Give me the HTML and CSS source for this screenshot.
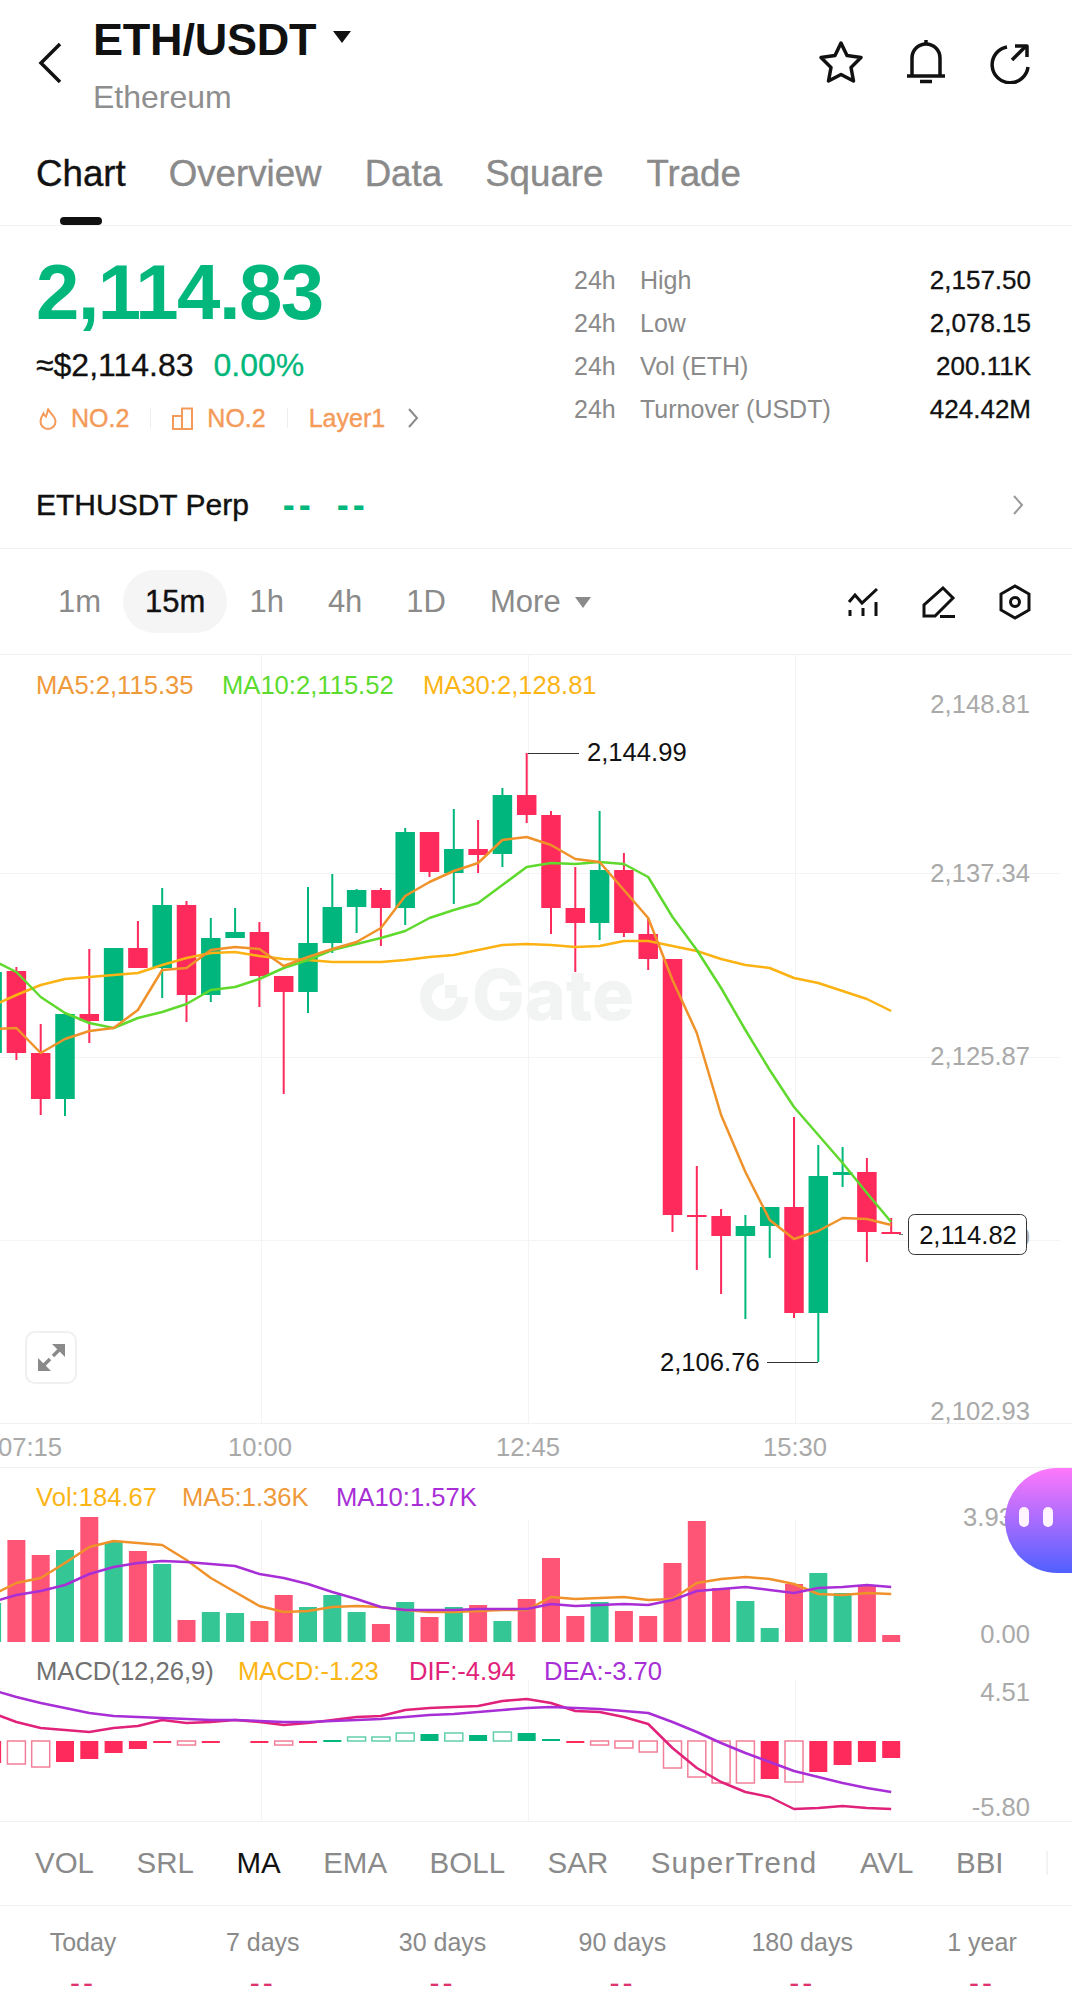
FILE: index.html
```html
<!DOCTYPE html>
<html lang="en">
<head>
    <meta charset="UTF-8">
    <meta name="viewport" content="width=device-width, initial-scale=1.0">
    <title>ETH/USDT</title>
    <link rel="stylesheet" href="styles.css">
</head>
<body>
    <div class="app">
        <header class="topbar">
            <svg class="back-icon" width="24" height="42" viewBox="0 0 24 42"><polyline points="22,2 3,21 22,40"/></svg>
            <div class="pair">
                <div class="pair-name">ETH/USDT <span class="caret-big"></span></div>
                <div class="pair-sub">Ethereum</div>
            </div>
            <div class="actions">
                <svg class="icon star" width="46" height="44" viewBox="0 0 46 44"><polygon points="23,3 29,15.500 43,17.500 33,27.500 35.500,41 23,34.500 10.500,41 13,27.500 3,17.500 17,15.500"/></svg>
                <svg class="icon bell" width="40" height="44" viewBox="0 0 40 44"><path d="M6 36V18a14 14 0 0 1 28 0V36"/><path d="M1 36H39"/><path d="M20 0V4"/><path d="M14 41.500H26"/></svg>
                <svg class="icon share" width="42" height="44" viewBox="0 0 42 44"><path d="M19 7A18 18 0 1 0 40 27"/><path d="M24 20L38 6"/><path d="M27 6H39V17"/></svg>
            </div>
        </header>

        <nav class="tabs">
            <a class="tab active">Chart</a>
            <a class="tab">Overview</a>
            <a class="tab">Data</a>
            <a class="tab">Square</a>
            <a class="tab">Trade</a>
        </nav>

        <section class="summary">
            <div class="summary-left">
                <div class="price">2,114.83</div>
                <div class="fiat-row">
                    <span class="fiat">≈$2,114.83</span>
                    <span class="change">0.00%</span>
                </div>
                <div class="tags">
                    <svg class="tag-icon" width="18" height="23" viewBox="0 0 18 23"><path d="M9 1.500C10 6 16.500 9 16.500 14.500a7.500 7.500 0 0 1-15 0C1.500 11 3 9 4.500 6.500C5 8 6 9 7 9.500C8 7 9 4.500 9 1.500Z"/></svg>
                    <span class="tag-text">NO.2</span>
                    <i class="tag-sep"></i>
                    <svg class="tag-icon" width="21" height="23" viewBox="0 0 21 23"><path d="M1 9H10V22H1Z"/><path d="M10 9V1.500H20V22H10"/></svg>
                    <span class="tag-text">NO.2</span>
                    <i class="tag-sep"></i>
                    <span class="tag-text">Layer1</span>
                    <svg class="tag-more" width="12" height="20" viewBox="0 0 12 20"><polyline points="2,1 10,10 2,19"/></svg>
                </div>
            </div>
            <div class="stats">
                <div class="stat-row"><span class="stat-h">24h</span><span class="stat-label">High</span><span class="stat-value">2,157.50</span></div>
                <div class="stat-row"><span class="stat-h">24h</span><span class="stat-label">Low</span><span class="stat-value">2,078.15</span></div>
                <div class="stat-row"><span class="stat-h">24h</span><span class="stat-label">Vol (ETH)</span><span class="stat-value">200.11K</span></div>
                <div class="stat-row"><span class="stat-h">24h</span><span class="stat-label">Turnover (USDT)</span><span class="stat-value">424.42M</span></div>
            </div>
        </section>

        <section class="perp">
            <span class="perp-name">ETHUSDT Perp</span>
            <span class="perp-dash">--</span>
            <span class="perp-dash">--</span>
            <svg class="perp-more" width="12" height="20" viewBox="0 0 12 20"><polyline points="2,1 10,10 2,19"/></svg>
        </section>

        <section class="intervals">
            <span class="interval">1m</span>
            <span class="interval active">15m</span>
            <span class="interval">1h</span>
            <span class="interval">4h</span>
            <span class="interval">1D</span>
            <span class="interval">More <span class="caret-small"></span></span>
            <div class="tools">
                <svg class="icon" width="32" height="30" viewBox="0 0 32 30"><polyline points="2,15 8,8 15,16 30,2"/><path d="M3 23V29M16 21V29M29 15V29"/></svg>
                <svg class="icon" width="34" height="32" viewBox="0 0 34 32"><path d="M21 2L31 12L13 30H2V19Z"/><path d="M18 30.500H33"/></svg>
                <svg class="icon" width="32" height="36" viewBox="0 0 32 36"><polygon points="16,2 30,10 30,26 16,34 2,26 2,10"/><circle cx="16" cy="18" r="4.500"/></svg>
            </div>
        </section>

        <section class="chart">
            <svg id="chart" width="1072" height="1166" viewBox="0 655 1072 1166"></svg>
            <button class="expand">
                <svg class="expand-icon" width="27" height="27" viewBox="0 0 27 27"><polygon points="27,0 27,13 14,0"/><polygon points="0,27 0,14 13,27"/><path d="M21 6L15 12M6 21L12 15"/></svg>
            </button>
            <div class="bubble"><i></i><i></i></div>
        </section>

        <nav class="indicators">
            <span>VOL</span>
            <span>SRL</span>
            <span class="active">MA</span>
            <span>EMA</span>
            <span>BOLL</span>
            <span>SAR</span>
            <span class="wide">SuperTrend</span>
            <span>AVL</span>
            <span>BBI</span>
            <i class="fade"></i>
        </nav>

        <section class="periods">
            <div class="period"><span>Today</span><b>--</b></div>
            <div class="period"><span>7 days</span><b>--</b></div>
            <div class="period"><span>30 days</span><b>--</b></div>
            <div class="period"><span>90 days</span><b>--</b></div>
            <div class="period"><span>180 days</span><b>--</b></div>
            <div class="period"><span>1 year</span><b>--</b></div>
        </section>
    </div>
    <script src="chart.js"></script>
</body>
</html>
```

FILE: styles.css
```css
body {
    margin: 0;
    background: #fff;
    color: #111;
    font-family: "Liberation Sans", Arial, sans-serif;
}
.app {
    width: 1072px;
    height: 2012px;
    overflow: hidden;
}
.icon {
    fill: none;
    stroke: #111;
    stroke-width: 3;
}

/* top bar */
.topbar {
    display: flex;
    height: 125px;
    box-sizing: border-box;
    padding: 15px 42px 0 38px;
}
.back-icon {
    margin-top: 27px;
    fill: none;
    stroke: #111;
    stroke-width: 3.5;
}
.pair {
    margin: 2px 0 0 31px;
}
.pair-name {
    font-size: 45px;
    line-height: 46px;
    font-weight: bold;
    letter-spacing: -0.2px;
}
.caret-big {
    display: inline-block;
    margin-left: 4px;
    vertical-align: 12px;
    border-left: 9px solid transparent;
    border-right: 9px solid transparent;
    border-top: 12px solid #111;
}
.pair-sub {
    margin-top: 14px;
    font-size: 32px;
    line-height: 40px;
    color: #8e8e8e;
}
.actions {
    display: flex;
    gap: 42px;
    height: 44px;
    margin: 25px 0 0 auto;
}
.actions .icon {
    stroke-width: 3.5;
    stroke-linejoin: round;
}

/* tabs */
.tabs {
    display: flex;
    gap: 43px;
    height: 101px;
    padding: 25px 36px 0;
    box-sizing: border-box;
    border-bottom: 1px solid #f1f1f1;
}
.tab {
    position: relative;
    font-size: 36.700px;
    line-height: 48px;
    color: #8a8a8a;
    -webkit-text-stroke: 0.4px #8a8a8a;
}
.tab.active {
    color: #111;
    -webkit-text-stroke: 0.4px #111;
}
.tab.active::after {
    content: "";
    position: absolute;
    left: 24px;
    top: 67px;
    width: 42px;
    height: 8px;
    border-radius: 4px;
    background: #111;
}

/* price summary */
.summary {
    display: flex;
    justify-content: space-between;
    height: 236px;
    box-sizing: border-box;
    padding: 28px 41px 0 36px;
}
.price {
    font-size: 78px;
    line-height: 76px;
    font-weight: bold;
    letter-spacing: -1.600px;
    color: #02b77b;
}
.fiat-row {
    display: flex;
    gap: 20px;
    margin-top: 15px;
    line-height: 40px;
    font-size: 32px;
    -webkit-text-stroke: 0.3px;
}
.change {
    color: #02b77b;
}
.tags {
    display: flex;
    align-items: center;
    margin-top: 18px;
    padding-left: 3px;
    height: 30px;
    color: #f49b5a;
}
.tag-icon {
    fill: none;
    stroke: #f49b5a;
    stroke-width: 2;
    margin-right: 14px;
}
.tag-text {
    font-size: 25px;
    -webkit-text-stroke: 0.4px #f49b5a;
}
.tag-sep {
    width: 1px;
    height: 20px;
    margin: 0 21px;
    background: #eee;
}
.tag-more {
    margin-left: 22px;
    fill: none;
    stroke: #8a8a8a;
    stroke-width: 2;
}
.stats {
    width: 457px;
    padding-top: 5px;
    font-size: 25px;
    color: #8a8a8a;
}
.stat-row {
    display: flex;
    line-height: 43px;
}
.stat-h {
    width: 66px;
}
.stat-value {
    margin-left: auto;
    font-size: 26px;
    color: #111;
    -webkit-text-stroke: 0.3px #111;
}

/* perpetual row */
.perp {
    display: flex;
    align-items: center;
    height: 87px;
    box-sizing: border-box;
    padding: 0 48px 0 36px;
    border-bottom: 1px solid #f1f1f1;
}
.perp-name {
    font-size: 30px;
    -webkit-text-stroke: 0.4px #111;
}
.perp-dash {
    margin-left: 22px;
    font-size: 36px;
    font-weight: bold;
    letter-spacing: 4px;
    color: #02b77b;
}
.perp-name + .perp-dash {
    margin-left: 34px;
}
.perp-more {
    margin-left: auto;
    fill: none;
    stroke: #999;
    stroke-width: 2;
}

/* interval row */
.intervals {
    display: flex;
    align-items: center;
    height: 106px;
    box-sizing: border-box;
    padding: 0 41px 0 36px;
    border-bottom: 1px solid #f1f1f1;
}
.interval {
    padding: 0 22px;
    font-size: 31px;
    line-height: 63px;
    color: #8a8a8a;
}
.interval.active {
    border-radius: 32px;
    background: #f5f5f5;
    color: #111;
    -webkit-text-stroke: 0.4px #111;
}
.caret-small {
    display: inline-block;
    margin-left: 6px;
    vertical-align: 4px;
    border-left: 8px solid transparent;
    border-right: 8px solid transparent;
    border-top: 11px solid #8a8a8a;
}
.tools {
    display: flex;
    align-items: center;
    gap: 43px;
    margin-left: auto;
}

/* chart area */
.chart {
    position: relative;
    height: 1167px;
    box-sizing: border-box;
    border-bottom: 1px solid #f1f1f1;
}
.chart svg {
    display: block;
}
.chart text {
    font-family: "Liberation Sans", Arial, sans-serif;
    font-size: 25.600px;
}
.chart .watermark {
    font-family: Inter, "Liberation Sans", sans-serif;
    font-size: 70px;
    font-weight: 800;
}
.expand {
    position: absolute;
    left: 25px;
    top: 676px;
    display: flex;
    align-items: center;
    justify-content: center;
    width: 52px;
    height: 53px;
    padding: 0;
    border: 2px solid #f0f0f0;
    border-radius: 10px;
    background: #fff;
}
.expand-icon {
    fill: #8a8a8a;
    stroke: #8a8a8a;
    stroke-width: 0;
}
.expand-icon path {
    stroke-width: 3.500;
}
.bubble {
    position: absolute;
    right: 0;
    top: 813px;
    display: flex;
    gap: 14px;
    align-items: center;
    width: 67px;
    height: 105px;
    box-sizing: border-box;
    padding: 0 0 8px 14px;
    border-radius: 53px 0 0 53px;
    background: linear-gradient(#ff78fb, #5060ff);
}
.bubble i {
    width: 10px;
    height: 20px;
    border-radius: 5px;
    background: #fff4ff;
}

/* indicator tabs */
.indicators {
    display: flex;
    align-items: center;
    gap: 42.500px;
    height: 84px;
    box-sizing: border-box;
    padding: 0 35px 2px;
    border-bottom: 1px solid #f1f1f1;
    font-size: 29.500px;
    color: #8a8a8a;
}
.indicators .active {
    color: #111;
}
.indicators .wide {
    letter-spacing: 1.200px;
}
.indicators .fade {
    flex: none;
    width: 2px;
    height: 24px;
    background: #f3f3f3;
}

/* period returns */
.periods {
    display: flex;
    justify-content: space-between;
    padding: 20px 7px 0 0;
}
.period {
    display: flex;
    flex-direction: column;
    align-items: center;
    width: 166px;
    font-size: 25px;
    line-height: 32px;
    color: #8a8a8a;
}
.period b {
    margin-top: 9px;
    font-size: 30px;
    font-weight: normal;
    letter-spacing: 3px;
    color: #e0336e;
}
```

FILE: chart.js
```js
const RED = '#fd2a5b';
const GREEN = '#01b67c';
const VOL_RED = '#fe5577';
const VOL_GREEN = '#34c694';
const ORANGE = '#f0922a';
const LIME = '#5fd92d';
const AMBER = '#fbb212';
const PURPLE = '#a82ed6';
const PINK = '#e0227a';
const GRAY = '#a9a9a9';
const GRID = '#f4f4f4';
const MARK = '#f2f4f4';

// First series entry sits just off the left edge
const xAt = i => 16.4 + 24.3 * (i - 1);

// Candles: [up, bodyTop, bodyBottom, high, low]
const candles = [
    [1, 972, 1053, 972, 1070], [0, 971, 1053, 967, 1060], [0, 1053, 1099, 1024, 1115],
    [1, 1014, 1099, 1014, 1116], [0, 1014, 1021, 949, 1043], [1, 948, 1021, 948, 1021],
    [0, 948, 968, 921, 968], [1, 905, 968, 888, 998], [0, 905, 995, 901, 1022],
    [1, 938, 995, 918, 1002], [1, 932, 938, 908, 938], [0, 932, 976, 922, 1007],
    [0, 976, 992, 976, 1094], [1, 943, 992, 887, 1013], [1, 907, 943, 874, 953],
    [1, 890, 907, 889, 933], [0, 890, 908, 888, 946], [1, 832, 908, 828, 925],
    [0, 832, 872, 832, 877], [1, 849, 873, 809, 904], [0, 849, 855, 820, 873],
    [1, 795, 854, 788, 867], [0, 795, 815, 753, 823], [0, 815, 908, 811, 934],
    [0, 908, 923, 867, 972], [1, 870, 923, 811, 940], [0, 870, 933, 853, 937],
    [0, 934, 959, 918, 970], [0, 959, 1215, 959, 1232], [0, 1215, 1217, 1166, 1270],
    [0, 1216, 1236, 1209, 1294], [1, 1226, 1236, 1215, 1319], [1, 1207, 1226, 1207, 1258],
    [0, 1207, 1313, 1117, 1318], [1, 1176, 1313, 1145, 1362], [1, 1172, 1175, 1147, 1187],
    [0, 1172, 1232, 1158, 1262], [0, 1232, 1234, 1218, 1234]
];

const ma5 = [1029, 1028, 1053, 1039, 1031, 1028, 1010, 970, 968, 950, 947, 949, 966, 957, 949, 942, 928, 896, 882, 871, 863, 840, 837, 845, 859, 862, 890, 918, 980, 1033, 1115, 1172, 1220, 1239, 1231, 1218, 1219, 1225];
const ma10 = [960, 972, 997, 1013, 1023, 1028, 1018, 1012, 1004, 990, 987, 979, 968, 960, 950, 944, 938, 931, 918, 910, 903, 885, 867, 863, 864, 862, 864, 877, 917, 950, 988, 1030, 1070, 1107, 1135, 1163, 1193, 1222];
const ma30 = [1006, 995, 985, 979, 977, 975, 973, 965, 958, 953, 952, 956, 959, 960, 962, 962, 962, 960, 957, 955, 950, 945, 944, 945, 947, 946, 941, 941, 946, 951, 959, 965, 968, 978, 983, 991, 999, 1011];

// Volume bars: [up, top]
const volBottom = 1642;
const volumes = [
    [1, 1603], [0, 1540], [0, 1555], [1, 1550], [0, 1517], [1, 1542], [0, 1551], [1, 1564], [0, 1620], [1, 1612],
    [1, 1613], [0, 1621], [0, 1595], [1, 1607], [1, 1595], [1, 1612], [0, 1624], [1, 1602], [0, 1617], [1, 1607],
    [0, 1605], [1, 1621], [0, 1599], [0, 1558], [0, 1616], [1, 1602], [0, 1611], [0, 1616], [0, 1563], [0, 1521],
    [0, 1588], [1, 1601], [1, 1628], [0, 1584], [1, 1573], [1, 1593], [0, 1586], [0, 1635]
];
const volMa5 = [1595, 1583, 1578, 1563, 1547, 1541, 1543, 1545, 1560, 1578, 1592, 1606, 1612, 1611, 1607, 1606, 1607, 1610, 1612, 1612, 1611, 1610, 1610, 1597, 1599, 1598, 1597, 1600, 1599, 1583, 1579, 1577, 1579, 1584, 1594, 1595, 1593, 1594];
const volMa10 = [1602, 1595, 1591, 1585, 1574, 1567, 1563, 1561, 1562, 1564, 1566, 1574, 1578, 1584, 1592, 1599, 1607, 1610, 1610, 1610, 1609, 1609, 1609, 1604, 1606, 1605, 1604, 1605, 1600, 1591, 1589, 1587, 1590, 1593, 1588, 1587, 1585, 1587];

// MACD bars: [colour, filled, y] measured from the zero line
const macdZero = 1741;
const macd = [
    ['r', 1, 1763], ['r', 0, 1764], ['r', 0, 1767], ['r', 1, 1762], ['r', 1, 1759], ['r', 1, 1753], ['r', 1, 1749], ['r', 1, 1743],
    ['r', 0, 1745], ['r', 1, 1743], null, ['r', 1, 1743], ['r', 0, 1745], ['r', 1, 1743], ['g', 1, 1740], ['g', 0, 1737],
    ['g', 0, 1737], ['g', 0, 1733], ['g', 1, 1734], ['g', 0, 1733], ['g', 1, 1735], ['g', 0, 1732], ['g', 1, 1733], ['g', 1, 1739],
    ['r', 1, 1743], ['r', 0, 1745], ['r', 0, 1748], ['r', 0, 1752], ['r', 0, 1768], ['r', 0, 1777], ['r', 0, 1783], ['r', 0, 1783],
    ['r', 1, 1779], ['r', 0, 1782], ['r', 1, 1772], ['r', 1, 1765], ['r', 1, 1762], ['r', 1, 1758]
];
const dif = [1713, 1722, 1728, 1730, 1732, 1728, 1726, 1720, 1723, 1722, 1720, 1722, 1725, 1723, 1720, 1717, 1716, 1710, 1708, 1707, 1706, 1701, 1699, 1703, 1711, 1712, 1717, 1724, 1748, 1768, 1782, 1792, 1797, 1809, 1808, 1806, 1808, 1809];
const dea = [1690, 1697, 1703, 1708, 1713, 1716, 1717, 1718, 1719, 1720, 1720, 1721, 1722, 1722, 1721, 1720, 1719, 1717, 1715, 1714, 1712, 1710, 1708, 1707, 1708, 1709, 1711, 1713, 1722, 1732, 1743, 1753, 1762, 1771, 1777, 1783, 1788, 1792];

const svg = document.getElementById('chart');
let out = '';

function rect(x, y, w, h, fill) {
    out += `<rect x="${x}" y="${y}" width="${w}" height="${h}" fill="${fill}"/>`;
}

function line(x1, y1, x2, y2, color) {
    out += `<line x1="${x1}" y1="${y1}" x2="${x2}" y2="${y2}" stroke="${color}" stroke-width="1"/>`;
}

function text(x, y, str, fill, anchor) {
    out += `<text x="${x}" y="${y}" fill="${fill}" text-anchor="${anchor || 'start'}">${str}</text>`;
}

function path(values, color) {
    const pts = values.map((y, i) => `${xAt(i)},${y}`).join(' ');
    out += `<polyline points="${pts}" fill="none" stroke="${color}" stroke-width="2.500" stroke-linejoin="round"/>`;
}

// Grid
[873, 1057, 1240].forEach(y => line(0, y + 0.5, 1060, y + 0.5, GRID));
[1423, 1467].forEach(y => line(0, y + 0.5, 1072, y + 0.5, '#f2f2f2'));
[261, 528, 795].forEach(x => {
    line(x + 0.5, 655, x + 0.5, 1423, GRID);
    line(x + 0.5, 1520, x + 0.5, 1642, GRID);
    line(x + 0.5, 1680, x + 0.5, 1821, GRID);
});

// Watermark
out += `<path d="M444 979A18 18 0 1 0 462 997" fill="none" stroke="${MARK}" stroke-width="12"/><rect x="445" y="985" width="12" height="13" fill="${MARK}"/>`;
out += `<text class="watermark" x="472" y="1020" fill="${MARK}">Gate</text>`;

// Candles
candles.forEach((c, i) => {
    const color = c[0] ? GREEN : RED;
    const x = xAt(i);
    rect(x - 1, c[3], 2, c[4] - c[3], color);
    rect(x - 9.75, c[1], 19.5, Math.max(c[2] - c[1], 2), color);
});
path(ma30, AMBER);
path(ma10, LIME);
path(ma5, ORANGE);

// Volume
volumes.forEach((v, i) => {
    rect(xAt(i) - 9, v[1], 18, volBottom - v[1], v[0] ? VOL_GREEN : VOL_RED);
});
path(volMa5, ORANGE);
path(volMa10, PURPLE);

// MACD
macd.forEach((m, i) => {
    if (!m) return;
    const color = m[0] === 'r' ? RED : GREEN;
    const top = Math.min(m[2], macdZero);
    const h = Math.abs(m[2] - macdZero);
    if (m[1]) {
        rect(xAt(i) - 9, top, 18, Math.max(h, 2), color);
    } else {
        const stroke = m[0] === 'r' ? '#f27f99' : '#62d0ab';
        out += `<rect x="${xAt(i) - 9}" y="${top}" width="18" height="${h}" fill="none" stroke="${stroke}" stroke-width="1.500"/>`;
    }
});
path(dif, PINK);
path(dea, PURPLE);

// Legends
text(36, 694, 'MA5:2,115.35', '#ef9a3a');
text(222, 694, 'MA10:2,115.52', '#5cdb2f');
text(423, 694, 'MA30:2,128.81', '#fbb516');
text(36, 1506, 'Vol:184.67', '#fbb516');
text(182, 1506, 'MA5:1.36K', '#ef9a3a');
text(336, 1506, 'MA10:1.57K', PURPLE);
text(36, 1680, 'MACD(12,26,9)', '#717171');
text(238, 1680, 'MACD:-1.23', '#fbb516');
text(409, 1680, 'DIF:-4.94', PINK);
text(544, 1680, 'DEA:-3.70', PURPLE);

// Axis labels
[[704, '2,148.81'], [873, '2,137.34'], [1056, '2,125.87'], [1237, '2,114.40'], [1411, '2,102.93'],
 [1517, '3.93K'], [1634, '0.00'], [1692, '4.51'], [1807, '-5.80']].forEach(a => {
    text(1030, a[0] + 9, a[1], GRAY, 'end');
});
[[-2, '07:15'], [228, '10:00'], [496, '12:45'], [763, '15:30']].forEach(a => {
    text(a[0], 1456, a[1], GRAY);
});

// High and low markers
line(528, 753.5, 579, 753.5, '#333');
text(587, 761, '2,144.99', '#111');
line(767, 1362.5, 818, 1362.5, '#333');
text(660, 1371, '2,106.76', '#111');

// Current price box
line(899, 1234.5, 903, 1234.5, '#777');
out += '<rect x="908.500" y="1214.500" width="118" height="40" rx="6" fill="#fff" stroke="#333" stroke-width="1"/>';
text(968, 1244, '2,114.82', '#111', 'middle');

svg.innerHTML = out;
```
